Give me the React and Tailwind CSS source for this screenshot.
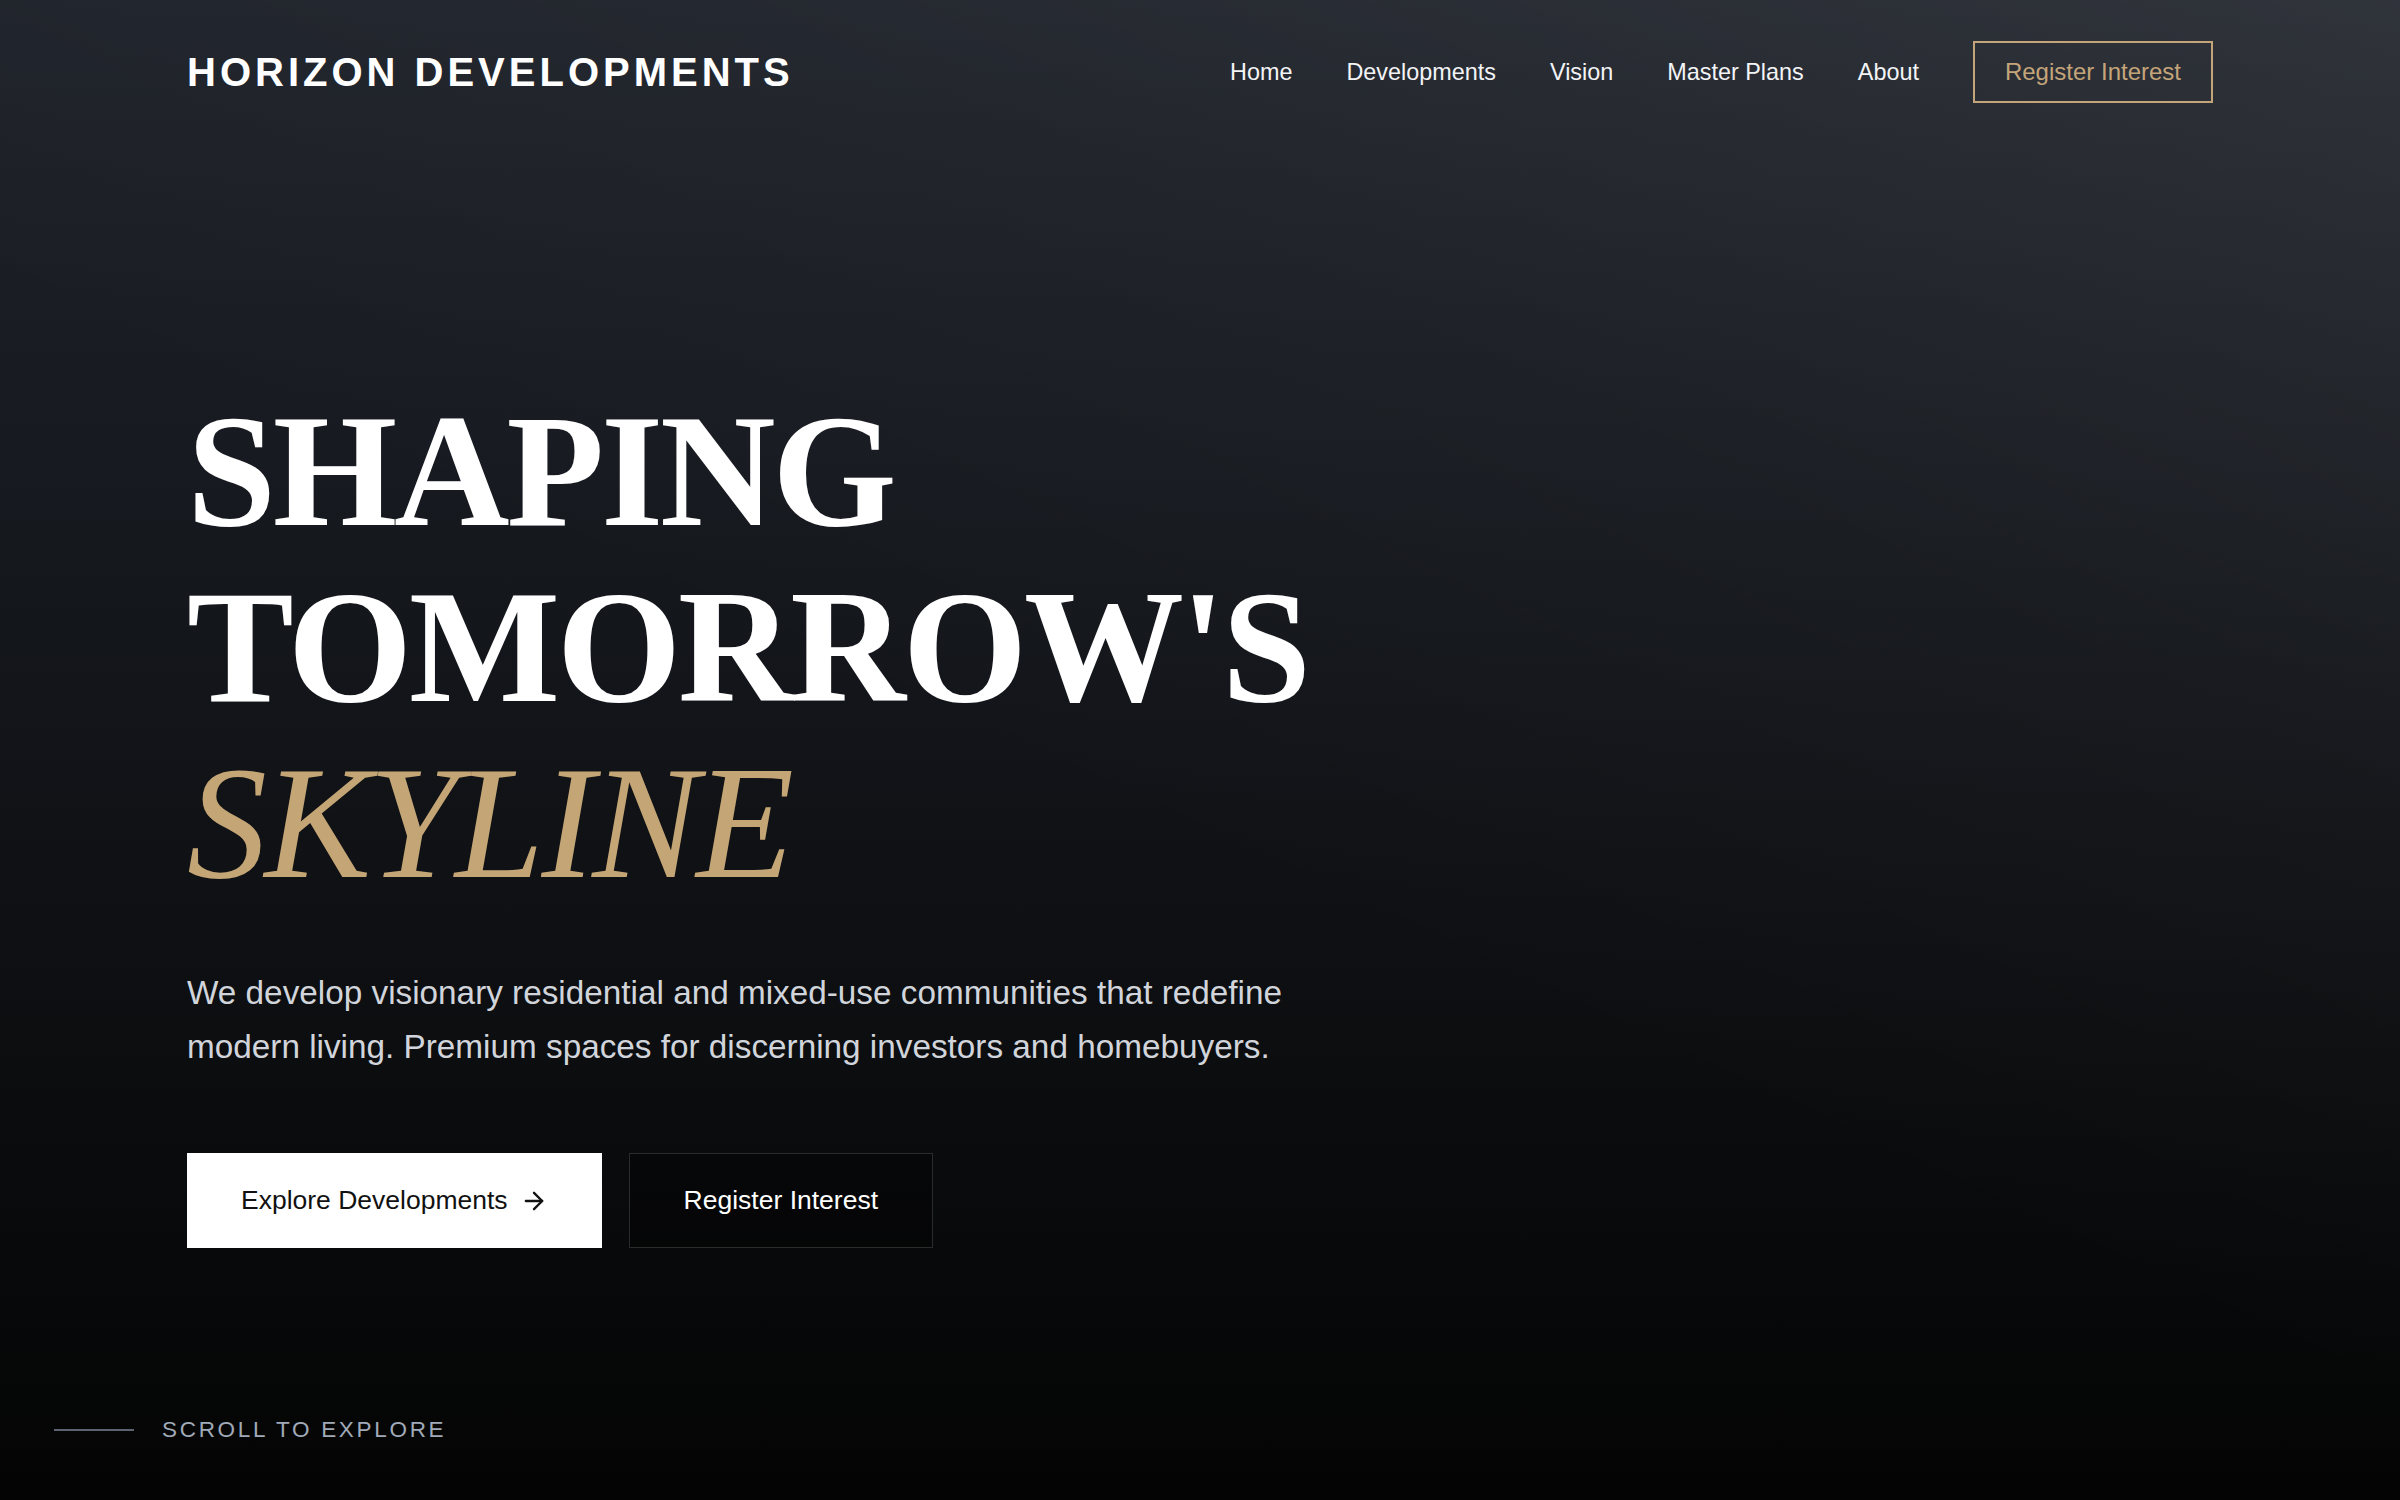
import { ArrowRight } from "lucide-react";

const navLinks = ["Home", "Developments", "Vision", "Master Plans", "About"];

export default function App() {
  return (
    <div className="relative w-full h-[1500px] overflow-hidden flex flex-col bg-[linear-gradient(180deg,#1f232b_0%,#171a20_30%,#0e1013_62%,#040404_100%)] font-['Liberation_Sans',Arial,sans-serif]">
      {/* soft light from the top right */}
      <div className="pointer-events-none absolute inset-0 bg-[linear-gradient(205deg,rgba(255,255,255,0.075)_0%,rgba(255,255,255,0.025)_30%,transparent_55%)]" />

      <header className="relative h-[144px] px-[187px] flex items-center justify-between">
        <div className="text-white font-bold text-[40px] leading-none tracking-[0.1em]">
          HORIZON DEVELOPMENTS
        </div>
        <nav className="flex items-center gap-[54px]">
          {navLinks.map((link) => (
            <a key={link} href="#" className="text-[23.4px] leading-[36px] text-[#f3f4f6]">
              {link}
            </a>
          ))}
          <button className="border-2 border-[#c4a57a] px-[30px] py-[11px] text-[24px] leading-[36px] text-[#c4a57a]">
            Register Interest
          </button>
        </nav>
      </header>

      <main className="relative flex-1 px-[187px] pt-[239px]">
        <h1 className="font-['Liberation_Serif','Times_New_Roman',serif] text-[160px] leading-[176px] tracking-[-0.02em] text-white font-bold">
          <span className="block">SHAPING</span>
          <span className="block">TOMORROW'S</span>
          <span className="block italic font-normal tracking-[-0.016em] text-[#c4a575]">SKYLINE</span>
        </h1>

        <p className="mt-[55px] max-w-[1152px] text-[33.3px] leading-[54px] text-[#d1d5db]">
          We develop visionary residential and mixed-use communities that redefine
          modern living. Premium spaces for discerning investors and homebuyers.
        </p>

        <div className="mt-[79px] flex gap-[27px]">
          <button className="h-[95px] px-[54px] bg-white text-[#111111] text-[26.5px] flex items-center gap-[12px]">
            Explore Developments
            <ArrowRight size={28} strokeWidth={2} />
          </button>
          <button className="h-[95px] px-[54px] border border-white/15 bg-black/30 text-white text-[26.5px] flex items-center">
            Register Interest
          </button>
        </div>
      </main>

      <div className="relative h-[140px] pl-[54px] flex items-center gap-[28px]">
        <span className="block w-[80px] h-[2px] bg-[#5b6470]" />
        <span className="text-[22.5px] tracking-[0.12em] text-[#a0aab8]">SCROLL TO EXPLORE</span>
      </div>
    </div>
  );
}
